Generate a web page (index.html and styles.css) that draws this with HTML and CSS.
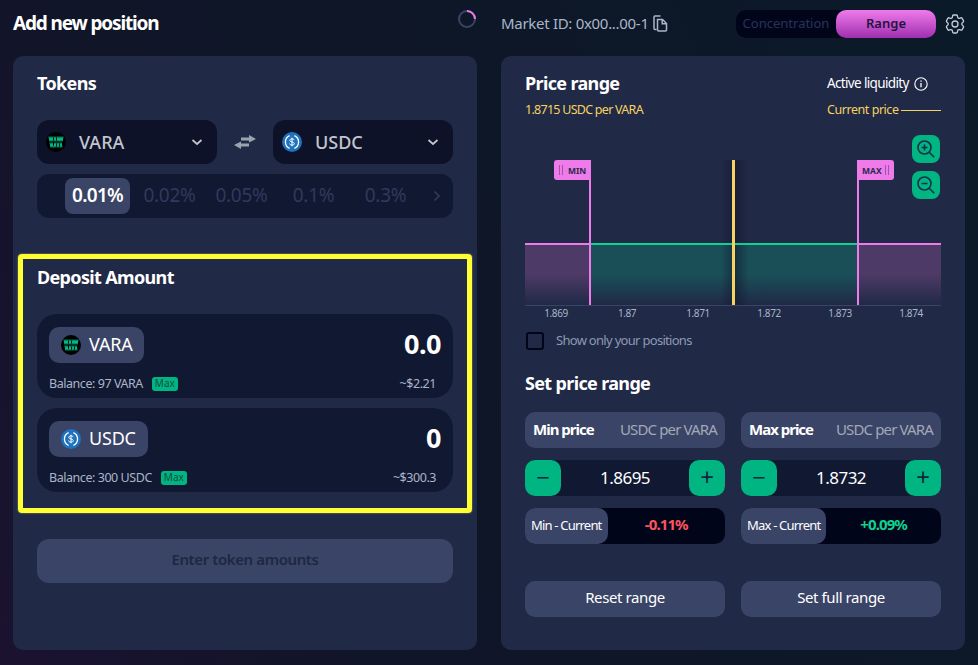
FILE: index.html
```html
<!doctype html>
<html>
<head>
    <meta charset="utf-8">
    <title>Add new position</title>
    <link rel="stylesheet" href="styles.css">
</head>
<body>
<svg class="defs" width="0" height="0">
    <symbol id="vara" viewBox="0 0 20 20">
        <circle cx="10" cy="10" r="10" fill="#000"/>
        <path d="M3 4.500l1 5 1-5 1 5 1-5M8 9.500l1-5 1 5M11 4.500l1 5 1-5 1 5M14 9.500l1-5 1 5 1-5M4 10.500l1 5 1-5 1 5M8 15.500l1-5 1 5M11 10.500l1 5 1-5M14 15.500l1-5 1 5" fill="none" stroke="#00c08b" stroke-width="1.100"/>
    </symbol>
    <symbol id="usdc" viewBox="0 0 20 20">
        <circle cx="10" cy="10" r="10" fill="#1f72bd"/>
        <path d="M7.600 3.600a7 7 0 0 0 0 12.800M12.400 3.600a7 7 0 0 1 0 12.800" fill="none" stroke="#fff" stroke-width="1.300"/>
        <path d="M12.200 8.200c-.2-.9-1-1.300-2.200-1.300-1.300 0-2.200.6-2.200 1.500 0 2.200 4.500 1 4.500 3.200 0 1-.9 1.500-2.300 1.500-1.300 0-2.200-.5-2.400-1.500M10 5.700v8.600" fill="none" stroke="#fff" stroke-width="1"/>
    </symbol>
    <symbol id="chevron" viewBox="0 0 12 8">
        <path d="M1.500 2l4.500 4 4.500-4" fill="none" stroke="currentColor" stroke-width="1.700"/>
    </symbol>
</svg>

<div class="page">
    <header class="top-bar">
        <div class="top-left">
            <h1>Add new position</h1>
            <svg class="spinner" width="18" height="18" viewBox="0 0 18 18">
                <circle cx="9" cy="9" r="8" fill="none" stroke="#3a4466" stroke-width="2"/>
                <path d="M9 1a8 8 0 0 1 8 8" fill="none" stroke="#ef7bea" stroke-width="2"/>
            </svg>
        </div>
        <div class="top-right">
            <div class="market">
                <span>Market ID: 0x00...00-1</span>
                <svg width="15" height="17" viewBox="0 0 15 17">
                    <path d="M3.500 14.500H2a1 1 0 0 1-1-1V2a1 1 0 0 1 1-1h5.500" fill="none" stroke="#a9b6c9" stroke-width="1.500"/>
                    <path d="M4.500 4.500h5l4 4v6.500a1 1 0 0 1-1 1h-7a1 1 0 0 1-1-1zM9.200 4.500v4.300h4.300" fill="none" stroke="#a9b6c9" stroke-width="1.500"/>
                </svg>
            </div>
            <div class="mode-switch">
                <span class="mode">Concentration</span>
                <span class="mode mode-on">Range</span>
            </div>
            <svg class="gear" width="24" height="24" viewBox="0 0 24 24" fill="none" stroke="#c3ccd8" stroke-width="1.300">
                <path d="M9.594 3.940c.09-.542.56-.94 1.110-.94h2.593c.55 0 1.020.398 1.110.94l.213 1.281c.063.374.313.686.645.870.074.04.147.083.22.127.325.196.72.257 1.075.124l1.217-.456a1.125 1.125 0 0 1 1.370.490l1.296 2.247a1.125 1.125 0 0 1-.26 1.431l-1.003.827c-.293.241-.438.613-.43.992a7.723 7.723 0 0 1 0 .255c-.008.378.137.75.43.991l1.004.827c.424.35.534.955.26 1.430l-1.298 2.247a1.125 1.125 0 0 1-1.369.491l-1.217-.456c-.355-.133-.75-.072-1.076.124a6.470 6.470 0 0 1-.22.128c-.331.183-.581.495-.644.869l-.213 1.281c-.09.543-.56.94-1.110.94h-2.594c-.55 0-1.019-.398-1.110-.94l-.213-1.281c-.062-.374-.312-.686-.644-.87a6.520 6.520 0 0 1-.22-.127c-.325-.196-.72-.257-1.076-.124l-1.217.456a1.125 1.125 0 0 1-1.369-.49l-1.297-2.247a1.125 1.125 0 0 1 .26-1.431l1.004-.827c.292-.24.437-.613.43-.991a6.932 6.932 0 0 1 0-.255c.007-.38-.138-.751-.43-.992l-1.004-.827a1.125 1.125 0 0 1-.26-1.430l1.297-2.247a1.125 1.125 0 0 1 1.370-.491l1.216.456c.356.133.751.072 1.076-.124.072-.044.146-.086.22-.128.332-.183.582-.495.644-.869l.214-1.280Z"/>
                <circle cx="12" cy="12" r="3"/>
            </svg>
        </div>
    </header>

    <main class="columns">
        <section class="panel">
            <h2>Tokens</h2>
            <div class="token-selects">
                <div class="select">
                    <svg class="coin"><use href="#vara"/></svg>
                    <span class="select-name">VARA</span>
                    <svg class="chevron"><use href="#chevron"/></svg>
                </div>
                <svg class="swap" width="22" height="14" viewBox="0 0 22 14">
                    <path d="M15 0l7 4-7 3.500V5.500H7v-3h8zM7 6.500V8.500h8v3H7V14L0 10z" fill="#9aa3b0"/>
                </svg>
                <div class="select">
                    <svg class="coin"><use href="#usdc"/></svg>
                    <span class="select-name">USDC</span>
                    <svg class="chevron"><use href="#chevron"/></svg>
                </div>
            </div>
            <div class="fees">
                <span class="fee fee-on">0.01%</span>
                <span class="fee">0.02%</span>
                <span class="fee">0.05%</span>
                <span class="fee">0.1%</span>
                <span class="fee">0.3%</span>
                <svg class="fee-next" width="8" height="12" viewBox="0 0 8 12"><path d="M1.500 1.500l4.500 4.500-4.500 4.500" fill="none" stroke="#2f3a5c" stroke-width="1.700"/></svg>
            </div>

            <div class="deposit">
                <h2>Deposit Amount</h2>
                <div class="amount">
                    <div class="amount-main">
                        <div class="token-pill">
                            <svg class="coin"><use href="#vara"/></svg>
                            <span>VARA</span>
                        </div>
                        <span class="amount-value">0.0</span>
                    </div>
                    <div class="amount-foot">
                        <span>Balance: 97 VARA</span>
                        <span class="max">Max</span>
                        <span class="usd">~$2.21</span>
                    </div>
                </div>
                <div class="amount">
                    <div class="amount-main">
                        <div class="token-pill">
                            <svg class="coin"><use href="#usdc"/></svg>
                            <span>USDC</span>
                        </div>
                        <span class="amount-value">0</span>
                    </div>
                    <div class="amount-foot">
                        <span>Balance: 300 USDC</span>
                        <span class="max">Max</span>
                        <span class="usd">~$300.3</span>
                    </div>
                </div>
            </div>

            <button class="submit">Enter token amounts</button>
        </section>

        <section class="panel">
            <div class="range-head">
                <h2>Price range</h2>
                <div class="liquidity">
                    <span>Active liquidity</span>
                    <svg width="14" height="14" viewBox="0 0 14 14">
                        <circle cx="7" cy="7" r="6.200" fill="none" stroke="#fff" stroke-width="1.100"/>
                        <path d="M7 6v4.200M7 3.500v1.300" stroke="#fff" stroke-width="1.300"/>
                    </svg>
                </div>
            </div>
            <div class="range-sub">
                <span class="now-price">1.8715 USDC per VARA</span>
                <div class="current-key"><span>Current price</span><i></i></div>
            </div>

            <div class="chart">
                <svg class="plot" width="416" height="171" viewBox="0 0 416 171">
                    <defs>
                        <linearGradient id="fade-purple" x1="0" y1="0" x2="0" y2="1">
                            <stop offset="0" stop-color="#4d3a66"/>
                            <stop offset=".5" stop-color="#4d3a66"/>
                            <stop offset="1" stop-color="#4d3a66" stop-opacity="0"/>
                        </linearGradient>
                        <linearGradient id="fade-green" x1="0" y1="0" x2="0" y2="1">
                            <stop offset="0" stop-color="#1a4f58"/>
                            <stop offset=".5" stop-color="#1a4f58"/>
                            <stop offset="1" stop-color="#1a4f58" stop-opacity="0"/>
                        </linearGradient>
                        <linearGradient id="shade" x1="0" y1="0" x2="1" y2="0">
                            <stop offset="0" stop-color="#10152c" stop-opacity="0"/>
                            <stop offset=".5" stop-color="#10152c" stop-opacity=".55"/>
                            <stop offset="1" stop-color="#10152c" stop-opacity="0"/>
                        </linearGradient>
                    </defs>
                    <rect x="0" y="109" width="65" height="61" fill="url(#fade-purple)"/>
                    <rect x="333" y="109" width="83" height="61" fill="url(#fade-purple)"/>
                    <rect x="65" y="109" width="268" height="61" fill="url(#fade-green)"/>
                    <rect x="196" y="25" width="28" height="145" fill="url(#shade)"/>
                    <rect x="0" y="108" width="65" height="2" fill="#ef7bea"/>
                    <rect x="333" y="108" width="83" height="2" fill="#ef7bea"/>
                    <rect x="65" y="108" width="268" height="2" fill="#0ed290"/>
                    <rect x="0" y="170" width="416" height="1" fill="#3a4466"/>
                    <rect x="207" y="25" width="3" height="145" fill="#f5d262"/>
                    <rect x="64" y="25" width="2" height="145" fill="#ef7bea"/>
                    <rect x="332" y="25" width="2" height="145" fill="#ef7bea"/>
                    <path d="M32 25h34v20H32a3 3 0 0 1-3-3V28a3 3 0 0 1 3-3z" fill="#ef7bea"/>
                    <path d="M332 25h34a3 3 0 0 1 3 3v14a3 3 0 0 1-3 3h-34z" fill="#ef7bea"/>
                    <path d="M34.500 30v10M37.500 30v10M360.500 30v10M363.500 30v10" stroke="#9a57a5" stroke-width="1"/>
                    <text class="flag-text" x="43" y="38.500">MIN</text>
                    <text class="flag-text" x="337" y="38.500">MAX</text>
                </svg>
                <button class="zoom">
                    <svg width="22" height="22" viewBox="0 0 22 22" fill="none" stroke="#15304a" stroke-width="1.600">
                        <circle cx="9.500" cy="9.500" r="6.500"/><path d="M14.200 14.200l5 5M6.500 9.500h6M9.500 6.500v6"/>
                    </svg>
                </button>
                <button class="zoom">
                    <svg width="22" height="22" viewBox="0 0 22 22" fill="none" stroke="#15304a" stroke-width="1.600">
                        <circle cx="9.500" cy="9.500" r="6.500"/><path d="M14.200 14.200l5 5M6.500 9.500h6"/>
                    </svg>
                </button>
                <div class="ticks">
                    <span>1.869</span><span>1.87</span><span>1.871</span><span>1.872</span><span>1.873</span><span>1.874</span>
                </div>
            </div>

            <label class="only-mine">
                <i class="check"></i>
                <span>Show only your positions</span>
            </label>

            <h2 class="set-title">Set price range</h2>
            <div class="range-grid">
                <div class="field"><b>Min price</b><span>USDC per VARA</span></div>
                <div class="field"><b>Max price</b><span>USDC per VARA</span></div>

                <div class="stepper">
                    <button class="step">&minus;</button><span>1.8695</span><button class="step">+</button>
                </div>
                <div class="stepper">
                    <button class="step">&minus;</button><span>1.8732</span><button class="step">+</button>
                </div>

                <div class="diff">
                    <span class="diff-label">Min - Current</span><b class="down">-0.11%</b>
                </div>
                <div class="diff">
                    <span class="diff-label">Max - Current</span><b class="up">+0.09%</b>
                </div>

                <button class="plain-btn">Reset range</button>
                <button class="plain-btn">Set full range</button>
            </div>
        </section>
    </main>
</div>
</body>
</html>
```

FILE: styles.css
```css
*{box-sizing:border-box;}
body{margin:0; padding:0; height:665px; overflow:hidden; background:linear-gradient(65deg,#1b1230 0%,#101528 30%,#0b1a28 100%); color:#fff; font-family:"Noto Sans","Liberation Sans",sans-serif;}
h1,h2{margin:0; font-weight:700; color:#fff;}
button{font-family:inherit; border:none; padding:0 0 2px;}
.defs{position:absolute;}

.page{padding:0 13px 15px;}
.top-bar,.columns{display:grid; grid-template-columns:464px 464px; gap:24px;}
.top-bar{height:56px; padding-bottom:8px; align-items:center;}
.top-left,.top-right{display:flex; align-items:center; justify-content:space-between;}
.top-left{padding-right:1px;}
h1{font-size:19px; line-height:22px; padding-bottom:2px; letter-spacing:-1.150px;}
.spinner{margin-top:-10px;}
.market{display:flex; align-items:center; gap:4px; padding-bottom:2px; font-size:15px; color:#a9b6c9; letter-spacing:-.3px;}
.mode-switch{display:flex; width:200px; height:28px; border-radius:10px; background:#01051a; font-size:13px; margin-left:auto;}
.mode{flex:1; display:flex; align-items:center; justify-content:center; padding-bottom:2px; color:#28335a;}
.mode-on{font-weight:600; color:#1f1440; border-radius:10px; background:linear-gradient(180deg,#ef7bea,#a02fb0);}
.gear{margin-left:7px; margin-right:-2px;}

.panel{height:594px; padding:16px 24px; border-radius:10px; background:#202946;}
h2{font-size:18px; line-height:22px; padding-bottom:2px; letter-spacing:-.65px;}

.token-selects{display:flex; align-items:center; justify-content:space-between; margin-top:24px;}
.select{display:flex; align-items:center; width:180px; height:44px; padding:0 14px 0 9px; border-radius:12px; background:#0d1229;}
.select-name{flex:1; margin-left:13px; padding-bottom:1px; font-size:18px; font-weight:500; color:#c3c6cc;}
.coin{width:20px; height:20px; flex:none;}
.chevron{width:12px; height:8px; color:#c3c6cc;}
.fees{display:flex; align-items:center; height:44px; margin-top:10px; padding:0 12px 0 28px; border-radius:12px; background:#111831;}
.fee{width:72px; height:36px; padding-bottom:2px; display:flex; align-items:center; justify-content:center; font-size:19px; color:#2f3a5c; letter-spacing:-.3px;}
.fee-on{width:65px; margin-right:3.500px; border-radius:8px; background:#3a4466; color:#fff; font-weight:600; letter-spacing:-.7px;}
.fee-next{margin-left:auto;}

.deposit{height:259px; margin:36px -19px 0; padding:7px 14px 0; border:5px solid #ffff33; border-radius:4px; box-shadow:0 0 2px rgba(255,255,120,.6);}
.amount{height:84px; margin-bottom:10px; padding:13px 12px 0; border-radius:20px; background:#111831;}
.deposit h2{margin-bottom:24px;}
.amount-main{display:flex; align-items:center; justify-content:space-between; height:36px;}
.token-pill{display:flex; align-items:center; gap:8px; height:36px; padding:0 12px; border-radius:10px; background:#3a4466; font-size:18px;}
.token-pill span{padding-bottom:2px; letter-spacing:-.2px;}
.amount-value{padding-bottom:3px; font-size:27px; font-weight:700; letter-spacing:-.5px;}
.amount-foot{display:flex; align-items:center; margin-top:12px; font-size:12.500px; color:#a9b6c9; letter-spacing:-.45px;}
.amount-foot > span:first-child,.usd{padding-bottom:1px;}
.max{margin-left:9px; padding:0 3px; height:14px; line-height:13px; border-radius:3px; background:#00b581; color:#10503f; font-size:10px; letter-spacing:0;}
.usd{margin-left:auto; padding-right:5px;}
.submit{width:100%; height:44px; margin-top:26px; padding-bottom:4px; border-radius:12px; background:#3a4466; color:#1f2744; font-size:15px; font-weight:600; letter-spacing:-.4px;}

.range-head,.range-sub{display:flex; justify-content:space-between; align-items:center;}
.liquidity{display:flex; align-items:center; gap:5px; width:114px; font-size:13.500px; letter-spacing:-.65px;}
.liquidity span{padding-bottom:2px;}
.range-sub{margin-top:4px; height:20px; padding-bottom:2px; font-size:12.500px; color:#f5d262;}
.now-price{letter-spacing:-.73px;}
.current-key{display:flex; align-items:center; width:114px; letter-spacing:-.45px;}
.current-key i{flex:1; height:1px; margin:2px 0 0 2px; background:#f5d262;}

.chart{position:relative; margin-top:15px;}
.plot{display:block;}
.flag-text{font-size:8.500px; font-weight:700; fill:#2a2a4c;}
.zoom{position:absolute; right:1px; top:0; width:28px; height:28px; padding:0; display:flex; align-items:center; justify-content:center; border-radius:8px; background:#00b581;}
.zoom + .zoom{top:36px;}
.ticks{display:grid; grid-template-columns:repeat(6,71px); height:16px; margin-left:-4.500px; text-align:center; font-size:10px; line-height:15px; color:#a9b6c9; letter-spacing:-.4px;}

.only-mine{display:flex; align-items:center; gap:12px; margin-top:10px; padding-left:1px; height:18px; font-size:13px; color:#8c9ab2; letter-spacing:-.7px;}
.only-mine span{padding-bottom:2px;}
.check{width:18px; height:18px; border:2px solid #01051a; border-radius:3px;}
.set-title{margin-top:22px;}

.range-grid{display:grid; grid-template-columns:200px 200px; gap:12px 16px; margin-top:16px;}
.field{display:flex; align-items:center; justify-content:space-between; height:36px; padding:0 8px 3px; border-radius:10px; background:#3a4466; font-size:15px;}
.field b{letter-spacing:-1px;}
.field span{color:#a2a8b6; letter-spacing:-.86px;}
.stepper{display:flex; align-items:center; height:36px; border-radius:10px; background:#111831;}
.stepper span{flex:1; padding-bottom:2px; text-align:center; font-size:17px; letter-spacing:-.5px;}
.step{width:36px; height:36px; border-radius:10px; background:#00b581; color:#10253f; font-size:24px; line-height:32px;}
.diff{display:flex; align-items:center; height:36px; border-radius:10px; background:#01051a;}
.diff-label{height:36px; padding:0 6px; line-height:35px; border-radius:10px; background:#3a4466; font-size:13px; letter-spacing:-.8px;}
.diff b{flex:1; padding-bottom:5px; text-align:center; font-size:15px; letter-spacing:-.9px;}
.down{color:#fb555f;}
.up{color:#0ed290;}
.plain-btn{grid-row:4; height:36px; margin-top:25px; padding-bottom:4px; border-radius:10px; background:#3a4466; color:#fff; font-size:15px; letter-spacing:-.4px;}
```
